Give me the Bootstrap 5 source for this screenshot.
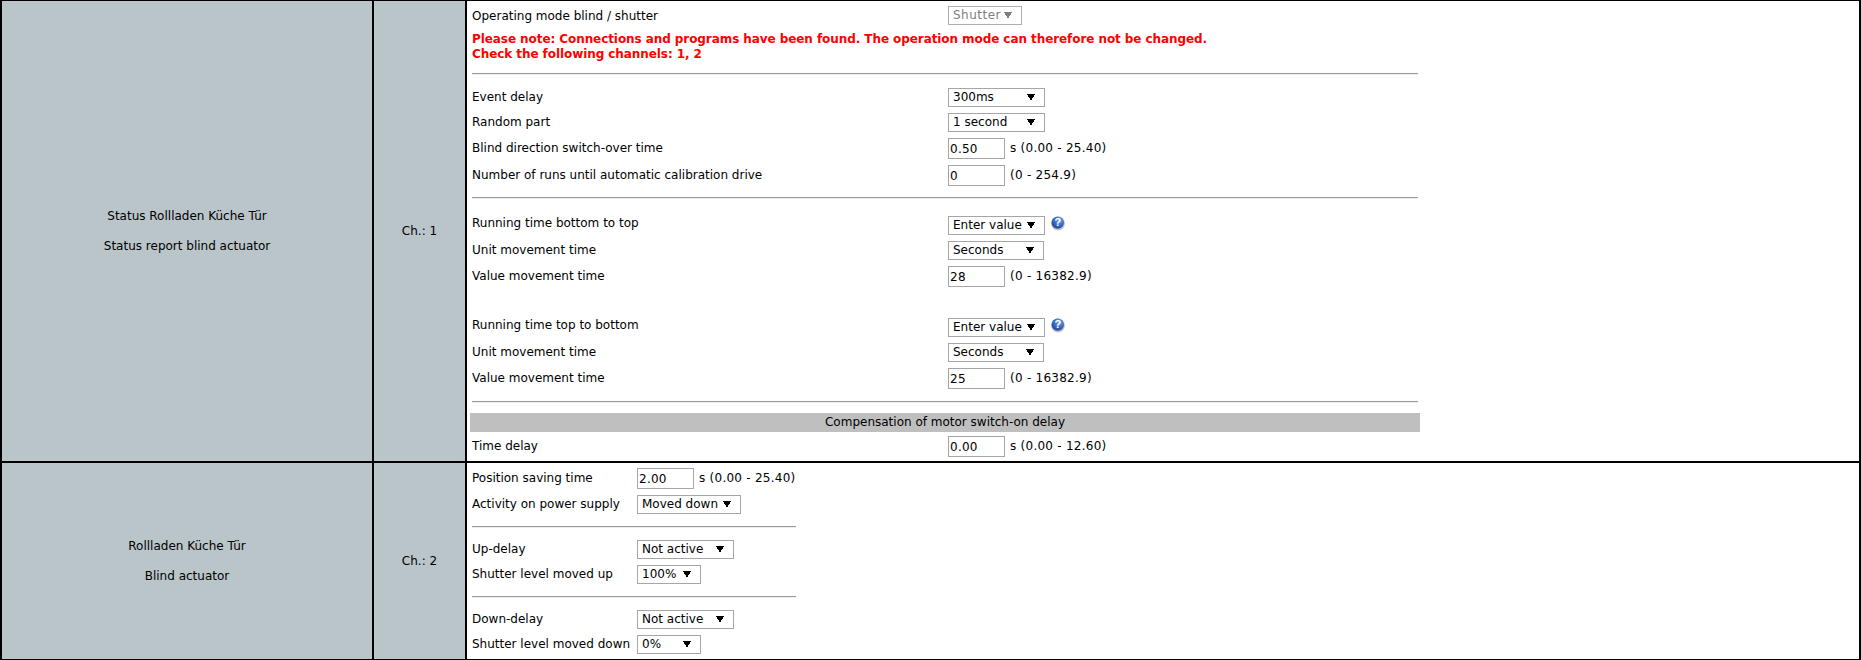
<!DOCTYPE html>
<html lang="en">
<head>
<meta charset="utf-8">
<title>Channel parameters</title>
<link href="https://cdn.jsdelivr.net/npm/bootstrap@5.3.0/dist/css/bootstrap.min.css" rel="stylesheet">
<style>
html, body { margin: 0; height: 660px; overflow: hidden; background: #fff; }
body { font-family: "DejaVu Sans", Verdana, sans-serif; font-size: 12px; line-height: 15px; color: #000; }
.ch-table { border-collapse: collapse; width: 1861px; height: 661px; margin-top: -1px; table-layout: fixed; }
.ch-table td { border: 2px solid #000; padding: 0; vertical-align: top; }
.ch-name { width: 372px; background: #bac5ca; text-align: center; vertical-align: middle !important; }
.ch-num { width: 93px; background: #bac5ca; text-align: center; vertical-align: middle !important; }
.ch-name p { margin: 0; line-height: 15px; }
.ch-name p + p { margin-top: 15px; }
.ch-body { padding: 2px 0 0 5px !important; background: #fff; }
.row-one { height: 462px; }
.row-two { height: 198px; }
.set-a { width: 946px; }
.set-b { width: 324px; }
.line-s { height: 25px; }
.line-i { height: 27px; }
.line-gap { height: 25px; }
.lab-a { width: 476px; flex: none; }
.lab-b { width: 165px; flex: none; }
.lab-up { padding-bottom: 4px; }
.lab-dn { padding-top: 1px; }
.note { color: #f00; font-weight: 700; line-height: 15px; margin-top: 4px; letter-spacing: -.075px; }
.rule { height: 1px; background: #999; border: 0; opacity: 1; margin: 0; box-shadow: 0 1px 0 #eee; }
.m-12-11 { margin: 11px 0 11px; }
.m-8-15 { margin: 8px 0 15px; }
.m-9-11 { margin: 9px 0 11px; }
.m-9-10 { margin: 9px 0 10px; }
.sect { background: #bfbfbf; height: 19px; line-height: 18px; text-align: center; width: 950px; margin-left: -2px; margin-bottom: 1px; }
.pick {
  appearance: none; -webkit-appearance: none; height: 19px; padding: 0 0 0 4px; margin: 0;
  border: 1px solid #a6a6a6; border-radius: 0; color: #000; font: 12px/15px "DejaVu Sans", Verdana, sans-serif;
  background-color: #fff;
  background-image: linear-gradient(to top right, transparent 50%, currentColor 50%), linear-gradient(to top left, transparent 50%, currentColor 50%);
  background-size: 4px 7px, 4px 7px; background-repeat: no-repeat;
  background-position: right 13px top 5px, right 9px top 5px;
}
.pick:disabled { color: #808080; border-color: #b0b0b0; opacity: 1; letter-spacing: .5px; }
.w-74 { width: 74px; }
.w-96 { width: 97px; }
.w-95 { width: 96px; }
.w-104 { width: 104px; }
.w-97 { width: 97px; }
.w-64 { width: 64px; }
.val { width: 57px; height: 21px; padding: 0 0 0 1px; margin: 0; border: 1px solid #a6a6a6; border-radius: 0; font: 12px/15px "DejaVu Sans", Verdana, sans-serif; color: #000; background: #fff; letter-spacing: .25px; }
.unit { margin-left: 5px; letter-spacing: .25px; }
.help { margin-left: 5px; margin-bottom: 6px; flex: none; }
</style>
</head>
<body>
<svg width="0" height="0" class="position-absolute"><defs><radialGradient id="hg" cx=".62" cy=".3" r=".75"><stop offset="0" stop-color="#7ea6e6"/><stop offset=".55" stop-color="#3a6cc4"/><stop offset="1" stop-color="#1d3f8f"/></radialGradient></defs></svg>
<table class="ch-table">
  <colgroup><col class="ch-name"><col class="ch-num"><col></colgroup>
  <tr class="row-one">
    <td class="ch-name"><p>Status Rollladen Küche Tür</p><p>Status report blind actuator</p></td>
    <td class="ch-num">Ch.: 1</td>
    <td class="ch-body">
      <div class="set-a">
        <div class="d-flex align-items-center line-s"><span class="lab-a lab-dn">Operating mode blind / shutter</span><select class="pick w-74" disabled><option>Shutter</option></select></div>
        <div class="note">Please note: Connections and programs have been found. The operation mode can therefore not be changed.<br>Check the following channels: 1, 2</div>
        <hr class="rule m-12-11">
        <div class="d-flex align-items-center line-s"><span class="lab-a">Event delay</span><select class="pick w-96"><option>300ms</option></select></div>
        <div class="d-flex align-items-center line-s"><span class="lab-a">Random part</span><select class="pick w-96"><option>1 second</option></select></div>
        <div class="d-flex align-items-center line-i"><span class="lab-a">Blind direction switch-over time</span><input class="val" value="0.50"><span class="unit">s (0.00 - 25.40)</span></div>
        <div class="d-flex align-items-center line-i"><span class="lab-a">Number of runs until automatic calibration drive</span><input class="val" value="0"><span class="unit">(0 - 254.9)</span></div>
        <hr class="rule m-8-15">
        <div class="d-flex align-items-center line-s"><span class="lab-a lab-up">Running time bottom to top</span><select class="pick w-96"><option>Enter value</option></select>
          <svg class="help" width="16" height="16" viewBox="0 0 16 16"><circle cx="8" cy="8.6" r="7" fill="#c4c6cc"/><circle cx="7.8" cy="7.6" r="6.2" fill="url(#hg)"/><text x="7.8" y="11.4" text-anchor="middle" font-family="Liberation Sans, sans-serif" font-weight="700" font-size="11" fill="#fff">?</text></svg>
        </div>
        <div class="d-flex align-items-center line-s"><span class="lab-a">Unit movement time</span><select class="pick w-95"><option>Seconds</option></select></div>
        <div class="d-flex align-items-center line-i"><span class="lab-a">Value movement time</span><input class="val" value="28"><span class="unit">(0 - 16382.9)</span></div>
        <div class="line-gap"></div>
        <div class="d-flex align-items-center line-s"><span class="lab-a lab-up">Running time top to bottom</span><select class="pick w-96"><option>Enter value</option></select>
          <svg class="help" width="16" height="16" viewBox="0 0 16 16"><circle cx="8" cy="8.6" r="7" fill="#c4c6cc"/><circle cx="7.8" cy="7.6" r="6.2" fill="url(#hg)"/><text x="7.8" y="11.4" text-anchor="middle" font-family="Liberation Sans, sans-serif" font-weight="700" font-size="11" fill="#fff">?</text></svg>
        </div>
        <div class="d-flex align-items-center line-s"><span class="lab-a">Unit movement time</span><select class="pick w-95"><option>Seconds</option></select></div>
        <div class="d-flex align-items-center line-i"><span class="lab-a">Value movement time</span><input class="val" value="25"><span class="unit">(0 - 16382.9)</span></div>
        <hr class="rule m-9-11">
        <div class="sect">Compensation of motor switch-on delay</div>
        <div class="d-flex align-items-center line-i"><span class="lab-a">Time delay</span><input class="val" value="0.00"><span class="unit">s (0.00 - 12.60)</span></div>
      </div>
    </td>
  </tr>
  <tr class="row-two">
    <td class="ch-name"><p>Rollladen Küche Tür</p><p>Blind actuator</p></td>
    <td class="ch-num">Ch.: 2</td>
    <td class="ch-body">
      <div class="set-b">
        <div class="d-flex align-items-center line-i"><span class="lab-b">Position saving time</span><input class="val" value="2.00"><span class="unit">s (0.00 - 25.40)</span></div>
        <div class="d-flex align-items-center line-s"><span class="lab-b">Activity on power supply</span><select class="pick w-104"><option>Moved down</option></select></div>
        <hr class="rule m-9-10">
        <div class="d-flex align-items-center line-s"><span class="lab-b">Up-delay</span><select class="pick w-97"><option>Not active</option></select></div>
        <div class="d-flex align-items-center line-s"><span class="lab-b">Shutter level moved up</span><select class="pick w-64"><option>100%</option></select></div>
        <hr class="rule m-9-10">
        <div class="d-flex align-items-center line-s"><span class="lab-b">Down-delay</span><select class="pick w-97"><option>Not active</option></select></div>
        <div class="d-flex align-items-center line-s"><span class="lab-b">Shutter level moved down</span><select class="pick w-64"><option>0%</option></select></div>
      </div>
    </td>
  </tr>
</table>
<script src="https://cdn.jsdelivr.net/npm/bootstrap@5.3.0/dist/js/bootstrap.bundle.min.js"></script>
</body>
</html>
